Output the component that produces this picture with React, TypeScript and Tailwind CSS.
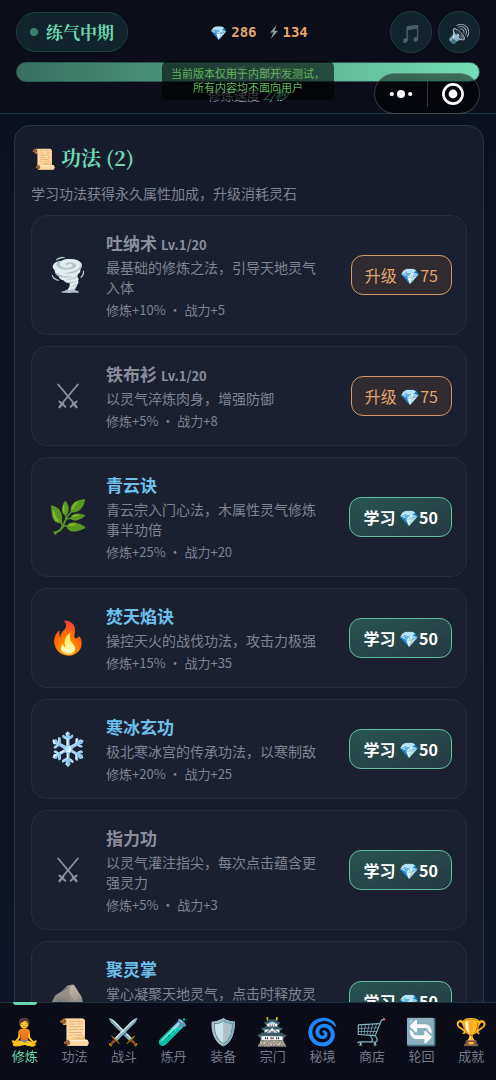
import clsx from "clsx"

interface Technique {
  icon: string;
  name: string;
  level?: string;
  desc: string;
  bonus: string;
  rare?: boolean;
  cost: number;
}

const techniques: Technique[] = [
  { icon: "🌪️", name: "吐纳术", level: "Lv.1/20", desc: "最基础的修炼之法，引导天地灵气入体", bonus: "修炼+10% · 战力+5", cost: 75 },
  { icon: "swords", name: "铁布衫", level: "Lv.1/20", desc: "以灵气淬炼肉身，增强防御", bonus: "修炼+5% · 战力+8", cost: 75 },
  { icon: "🌿", name: "青云诀", desc: "青云宗入门心法，木属性灵气修炼事半功倍", bonus: "修炼+25% · 战力+20", rare: true, cost: 50 },
  { icon: "🔥", name: "焚天焰诀", desc: "操控天火的战伐功法，攻击力极强", bonus: "修炼+15% · 战力+35", rare: true, cost: 50 },
  { icon: "❄️", name: "寒冰玄功", desc: "极北寒冰宫的传承功法，以寒制敌", bonus: "修炼+20% · 战力+25", rare: true, cost: 50 },
  { icon: "swords", name: "指力功", desc: "以灵气灌注指尖，每次点击蕴含更强灵力", bonus: "修炼+5% · 战力+3", cost: 50 },
  { icon: "🪨", name: "聚灵掌", desc: "掌心凝聚天地灵气，点击时释放灵力波动", bonus: "修炼+10% · 战力+8", rare: true, cost: 50 },
];

const tabs = [
  { icon: "🧘", label: "修炼" },
  { icon: "📜", label: "功法" },
  { icon: "⚔️", label: "战斗" },
  { icon: "🧪", label: "炼丹" },
  { icon: "🛡️", label: "装备" },
  { icon: "🏯", label: "宗门" },
  { icon: "🌀", label: "秘境" },
  { icon: "🛒", label: "商店" },
  { icon: "🔄", label: "轮回" },
  { icon: "🏆", label: "成就" },
];

function SwordsIcon() {
  return (
    <svg
      className="w-6 h-7"
      viewBox="0 0 24 28"
      fill="none"
      stroke="currentColor"
      strokeLinecap="round"
      aria-hidden="true"
    >
      <path d="M2.2 2.5 L18 21.5 M21.8 2.5 L6 21.5" strokeWidth="1.9" />
      <path d="M7 21 L3.6 25 M17 21 L20.4 25" strokeWidth="2.6" />
      <path d="M3.4 19.5 L9.3 24.8 M20.6 19.5 L14.7 24.8" strokeWidth="2" />
    </svg>
  );
}

function BoltIcon() {
  return (
    <svg className="w-[10px] h-4" viewBox="0 0 10 16" fill="#8e98a8" aria-hidden="true">
      <path d="M7.6 1 L1 8.8 L4.4 8.2 L1.8 15 L9.2 6.4 L5.6 7.1 Z" />
    </svg>
  );
}

// mini program controls, they float over the page
function Capsule() {
  return (
    <div className="absolute top-[73px] right-4 flex items-center w-[106px] h-[41px] rounded-full border border-white/20 bg-black/50">
      <button className="flex-1 flex justify-center" aria-label="更多">
        <svg className="w-6 h-6" viewBox="0 0 24 24" fill="#fff">
          <circle cx="2.8" cy="12" r="2.1" />
          <circle cx="12" cy="12" r="4" />
          <circle cx="21.2" cy="12" r="2.1" />
        </svg>
      </button>
      <span className="w-px h-[26px] bg-white/20" />
      <button className="flex-1 flex justify-center" aria-label="关闭">
        <svg className="w-6 h-6" viewBox="0 0 24 24">
          <circle cx="12" cy="12" r="9.6" fill="none" stroke="#fff" strokeWidth="2.6" />
          <circle cx="12" cy="12" r="4.4" fill="#fff" />
        </svg>
      </button>
    </div>
  );
}

function Header() {
  const classRound = `
    flex items-center justify-center w-[42px] h-[42px] rounded-full
    border border-[#263b41] bg-[#12242b] text-lg
  `;
  return (
    <header className="relative shrink-0 h-[114px] px-4 pt-[11px] border-b border-[#19333a] bg-[#0b0d18]">
      <div className="flex items-center justify-between">
        <div className="flex items-center gap-2 h-10 px-[13px] rounded-full border border-[#21403f] bg-[#12242b]">
          <span className="w-2 h-2 rounded-full bg-[#3d7d6c]" />
          <span className="font-['Noto_Serif_CJK_SC','Noto_Sans_CJK_SC',serif] text-[17px] font-bold text-[#6ed8b0]">
            练气中期
          </span>
        </div>
        <div className="flex gap-3 font-['DejaVu_Sans_Mono',monospace] text-sm font-bold text-[#e2a56f]">
          <span className="flex items-center gap-1">
            <span className="font-['Noto_Sans_CJK_SC',sans-serif]">💎</span>286
          </span>
          <span className="flex items-center gap-1">
            <BoltIcon />134
          </span>
        </div>
        <div className="flex gap-[6px]">
          <button className={classRound} aria-label="音乐">
            <span className="opacity-80">🎵</span>
          </button>
          <button className={classRound} aria-label="音效">🔊</button>
        </div>
      </div>
      <div className="flex items-center justify-center mt-[9px] h-5 rounded-full border border-[#2c5a50] bg-linear-to-r from-[#38705f] to-[#74dfb7] text-sm text-white/60">
        1.9千 / 990
      </div>
      <p className="mt-[3px] text-center text-[13px] leading-5 text-[#858a98]">
        修炼速度 <em className="text-[#6ed8b0]">2/秒</em>
      </p>
      <div className="absolute top-[61px] inset-x-0 flex justify-center">
        <p className="w-[172px] pt-[5px] pb-[6px] rounded-md bg-black/60 text-center text-[11px] leading-[14px] text-[#62b35c]">
          当前版本仅用于内部开发测试，
          <br />
          所有内容均不面向用户
        </p>
      </div>
      <Capsule />
    </header>
  );
}

function TechniqueCard({ item }: { item: Technique }) {
  const learned = Boolean(item.level);
  const classButton = learned
    ? "border-[#cf9a68] bg-[#302b30] text-[#e2a56f]"
    : "border-[#62bfa0] bg-linear-to-br from-[#285450] to-[#253a42] text-white font-bold";
  return (
    <li className="flex items-center rounded-2xl border border-[#262d3c] bg-[#1b2030] px-[14px] py-[15px]">
      <span className="flex justify-center w-11 mr-4 font-['Noto_Color_Emoji'] text-[32px] leading-10 text-[#8b8f9d]">
        {item.icon === "swords" ? <SwordsIcon /> : item.icon}
      </span>
      <div className="flex-1 min-w-0 mr-6">
        <h3
          className={clsx(
            "flex items-baseline gap-1 h-6 text-[17px] leading-6 font-bold",
            item.rare ? "text-[#6cc0ea]" : "text-[#8b8f9d]"
          )}
        >
          {item.name}
          {learned && <span className="text-[13px]">{item.level}</span>}
        </h3>
        <p className="mt-[2px] text-sm leading-5">{item.desc}</p>
        <p className="mt-1 text-[13px] leading-[18px]">{item.bonus}</p>
      </div>
      <button
        className={clsx(
          "shrink-0 h-10 px-[13px] rounded-xl border text-base whitespace-nowrap",
          classButton
        )}
      >
        {learned ? "升级" : "学习"} 💎{item.cost}
      </button>
    </li>
  );
}

function TabBar() {
  return (
    <nav className="shrink-0 grid grid-cols-10 border-t border-[#1b3238] bg-[#0a0c17]">
      {tabs.map((tab, i) => (
        <button
          key={tab.label}
          className={clsx(
            "relative flex flex-col items-center pt-[14px] pb-[15px]",
            i === 0 ? "text-[#6ed8b0]" : "text-[#767a89]"
          )}
        >
          {i === 0 && (
            <span className="absolute -top-px w-6 h-[3px] rounded-b-sm bg-[#6ed8b0]" />
          )}
          <span className="font-['Noto_Color_Emoji'] text-[26px] leading-[30px]">{tab.icon}</span>
          <span className="text-[13px] leading-[18px]">{tab.label}</span>
        </button>
      ))}
    </nav>
  );
}

export default function App() {
  return (
    <div className="flex flex-col h-screen bg-linear-to-b from-[#0b111b] to-[#10162a] text-[#7f8392] font-['Noto_Sans_CJK_SC',sans-serif]">
      <Header />
      <main className="flex-1 min-h-0 overflow-y-auto [scrollbar-width:none] pl-[14px] pr-3 pt-[11px]">
        <section className="rounded-2xl border border-[#203a40] bg-[#171c2c] px-4 py-4">
          <h2 className="font-['Noto_Serif_CJK_SC','Noto_Sans_CJK_SC',serif] text-xl leading-8 font-bold text-[#6ed8b0]">
            📜 功法 (2)
          </h2>
          <p className="mt-[9px] text-sm leading-5">
            学习功法获得永久属性加成，升级消耗灵石
          </p>
          <ul className="flex flex-col gap-[11px] mt-3">
            {techniques.map((item) => (
              <TechniqueCard key={item.name} item={item} />
            ))}
          </ul>
        </section>
      </main>
      <TabBar />
    </div>
  );
}
